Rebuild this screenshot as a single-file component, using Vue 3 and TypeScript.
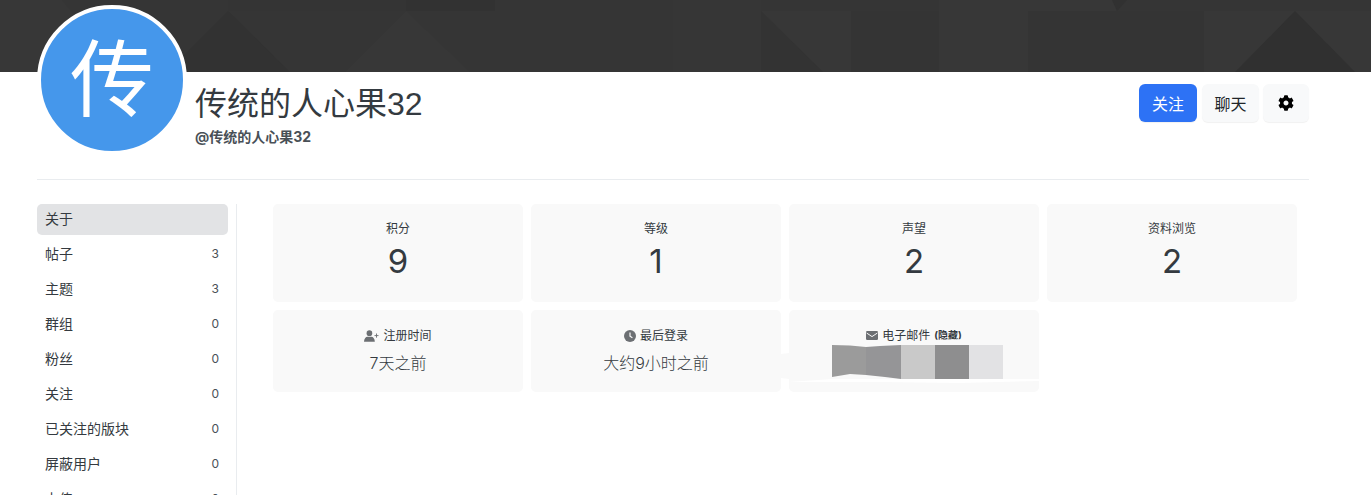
<template>
  <div class="page">
    <svg class="cover" viewBox="0 0 1371 72" preserveAspectRatio="none">
      <rect width="1371" height="72" fill="#353535" />
      <polygon v-for="(p, i) in coverShapes" :key="i" :points="p.points" :fill="p.fill" />
    </svg>

    <div class="container">
      <header class="profile-head">
        <div class="avatar">传</div>
        <div class="names">
          <h1>传统的人心果32</h1>
          <div class="handle">@传统的人心果32</div>
        </div>
        <div class="actions">
          <button class="btn primary">关注</button>
          <button class="btn chat">聊天</button>
          <button class="btn icon" aria-label="设置">
            <svg viewBox="0 0 512 512" width="16" height="16">
              <path d="M487.4 315.7l-42.6-24.6c4.3-23.2 4.3-47 0-70.2l42.6-24.6c4.9-2.8 7.1-8.6 5.5-14-11.1-35.6-30-67.8-54.7-94.6-3.8-4.1-10-5.1-14.8-2.3L380.8 110c-17.9-15.4-38.5-27.3-60.8-35.1V25.8c0-5.6-3.9-10.5-9.4-11.7-36.7-8.2-74.3-7.8-109.2 0-5.5 1.2-9.4 6.1-9.4 11.7V75c-22.2 7.9-42.8 19.8-60.8 35.1L88.7 85.5c-4.9-2.8-11-1.9-14.8 2.3-24.7 26.7-43.6 58.9-54.7 94.6-1.7 5.4.6 11.2 5.5 14L67.3 221c-4.3 23.2-4.3 47 0 70.2l-42.6 24.6c-4.9 2.8-7.1 8.6-5.5 14 11.1 35.6 30 67.8 54.7 94.6 3.8 4.1 10 5.1 14.8 2.3l42.6-24.6c17.9 15.4 38.5 27.3 60.8 35.1v49.2c0 5.6 3.9 10.5 9.4 11.7 36.7 8.2 74.3 7.8 109.2 0 5.5-1.2 9.4-6.1 9.4-11.7v-49.2c22.2-7.9 42.8-19.8 60.8-35.1l42.6 24.6c4.9 2.8 11 1.9 14.8-2.3 24.7-26.7 43.6-58.9 54.7-94.6 1.5-5.5-.7-11.3-5.6-14.1zM256 336c-44.1 0-80-35.9-80-80s35.9-80 80-80 80 35.9 80 80-35.9 80-80 80z" fill="#000" />
            </svg>
          </button>
        </div>
      </header>

      <div class="content">
        <aside class="sidebar">
          <a v-for="item in navItems" :key="item.label" class="nav-item" :class="{ active: item.active }">
            <span>{{ item.label }}</span>
            <span v-if="item.count !== undefined" class="count">{{ item.count }}</span>
          </a>
        </aside>

        <main class="stats">
          <div v-for="s in topStats" :key="s.label" class="card big">
            <div class="label">{{ s.label }}</div>
            <div class="value">{{ s.value }}</div>
          </div>

          <div class="card small">
            <div class="label">
              <svg viewBox="0 0 18 14" width="15" height="12">
                <circle cx="6.5" cy="3.6" r="3.4" fill="#6c6f73" />
                <path d="M0 14c0-3.6 2-6 4.2-6h4.6c2.2 0 4.2 2.4 4.2 6z" fill="#6c6f73" />
                <path d="M15 4v5M12.6 6.5h4.8" stroke="#6c6f73" stroke-width="1.1" />
              </svg>
              注册时间
            </div>
            <div class="text">7天之前</div>
          </div>
          <div class="card small">
            <div class="label">
              <svg viewBox="0 0 12 12" width="12" height="12">
                <circle cx="6" cy="6" r="6" fill="#6c6f73" />
                <path d="M6 2.6v3.6l2.4 1.6" stroke="#f9f9f9" stroke-width="1.2" fill="none" />
              </svg>
              最后登录
            </div>
            <div class="text">大约9小时之前</div>
          </div>
          <div class="card small email">
            <div class="label">
              <svg viewBox="0 0 12 9" width="12" height="9">
                <rect width="12" height="9" rx="1.2" fill="#6c6f73" />
                <path d="M.6 2l5.4 3.6L11.4 2" stroke="#f9f9f9" stroke-width="1" fill="none" />
              </svg>
              电子邮件 <small>(隐藏)</small>
            </div>
            <div class="text">&nbsp;</div>

            <!-- 邮箱打码的色块，盖在卡片上 -->
            <svg class="mask" viewBox="781 338 258 46" width="258" height="46">
              <polygon points="781,354 789,353 1037,344 1037,379 789,379 781,378" fill="#f9f9f9" />
              <polygon points="925,340 968,339 968,345 925,345" fill="#f9f9f9" />
              <polygon points="789,382 832,379 1039,379 1039,381 960,383 880,382" fill="#fff" />
              <polygon points="832,345 850,345.5 866,347 866,375 850,374 832,377" fill="#9b9b9b" />
              <polygon points="866,347 880,346 901,345 901,379 885,377 866,375" fill="#959597" />
              <rect x="901" y="345" width="34" height="34" fill="#c9c9c9" />
              <rect x="935" y="345" width="34" height="34" fill="#8e8e8f" />
              <rect x="969" y="345" width="34" height="34" fill="#e2e2e4" />
            </svg>
          </div>
        </main>
      </div>
    </div>
  </div>
</template>

<script setup lang="ts">
interface NavItem {
  label: string
  count?: number
  active?: boolean
}

const navItems: NavItem[] = [
  { label: '关于', active: true },
  { label: '帖子', count: 3 },
  { label: '主题', count: 3 },
  { label: '群组', count: 0 },
  { label: '粉丝', count: 0 },
  { label: '关注', count: 0 },
  { label: '已关注的版块', count: 0 },
  { label: '屏蔽用户', count: 0 },
  { label: '上传', count: 0 }
]

const topStats = [
  { label: '积分', value: 9 },
  { label: '等级', value: 1 },
  { label: '声望', value: 2 },
  { label: '资料浏览', value: 2 }
]

// 封面的几何底纹
const coverShapes = [
  { points: '0,0 62,0 120,72 0,72', fill: '#373737' },
  { points: '228,11 290,72 167,72', fill: '#323232' },
  { points: '228,0 406,0 406,11 228,11', fill: '#343434' },
  { points: '406,0 495,0 495,11 406,11', fill: '#323232' },
  { points: '406,11 470,72 345,72', fill: '#373737' },
  { points: '673,0 761,0 761,72 673,72', fill: '#363636' },
  { points: '761,11 851,11 851,72 761,72', fill: '#373737' },
  { points: '761,11 823,72 761,72', fill: '#333333' },
  { points: '851,11 939,11 939,72 851,72', fill: '#343434' },
  { points: '939,11 1028,11 1028,72 939,72', fill: '#373737' },
  { points: '1028,11 1204,11 1204,72 1028,72', fill: '#343434' },
  { points: '939,0 1117,0 1117,11 939,11', fill: '#373737' },
  { points: '1112,0 1127,0 1117,11', fill: '#313131' },
  { points: '1204,11 1371,11 1371,72 1204,72', fill: '#373737' },
  { points: '1295,11 1355,72 1235,72', fill: '#303030' }
]
</script>

<style>
html,
body {
  margin: 0;
  overflow: hidden;
  background: #fff;
}
</style>

<style scoped>
.page {
  height: 495px;
  overflow: hidden;
  font-family: "Inter", "Noto Sans CJK SC", sans-serif;
  color: #343a40;
}

.cover {
  display: block;
  width: 100%;
  height: 72px;
}

.container {
  margin: 0 62px 0 37px;
}

.profile-head {
  display: flex;
  align-items: flex-start;
  padding-bottom: 24px;
  border-bottom: 1px solid #e9ecef;
  margin-bottom: 24px;
}

.avatar {
  box-sizing: border-box;
  width: 150px;
  height: 150px;
  margin-top: -67px;
  border: 4px solid #fff;
  border-radius: 50%;
  background: #4597eb;
  color: #fff;
  font-size: 84px;
  line-height: 142px;
  text-align: center;
  position: relative;
}

.names {
  margin-left: 8px;
  padding-top: 9px;
}

h1 {
  margin: 0;
  font-family: "Liberation Sans", "Noto Sans CJK SC", sans-serif;
  font-size: 32px;
  font-weight: 400;
  line-height: 46px;
}

.handle {
  font-size: 14px;
  font-weight: 700;
  line-height: 20px;
  color: #495057;
}

.actions {
  display: flex;
  gap: 5px;
  margin-left: auto;
  margin-top: 12px;
}

.btn {
  height: 38px;
  padding: 0;
  border: none;
  border-radius: 6px;
  background: #f8f9fa;
  box-shadow: 0 1px 1px rgba(0, 0, 0, 0.06);
  color: #212529;
  font-family: inherit;
  font-size: 16px;
  display: flex;
  align-items: center;
  justify-content: center;
}

.btn.primary {
  background: #2d72f5;
  color: #fff;
  width: 58px;
}

.btn.chat {
  width: 57px;
}

.btn.icon {
  width: 46px;
  margin-left: -1px;
}

.content {
  display: flex;
  align-items: flex-start;
}

.sidebar {
  box-sizing: border-box;
  width: 200px;
  min-height: 320px;
  padding-right: 8px;
  border-right: 1px solid #e9ecef;
  flex-shrink: 0;
}

.nav-item {
  display: flex;
  justify-content: space-between;
  align-items: center;
  box-sizing: border-box;
  height: 31px;
  margin-bottom: 4px;
  padding: 0 9px 4px 8px;
  border-radius: 5px;
  font-size: 14px;
  color: #343a40;
}

.nav-item.active {
  background: #e2e3e5;
}

.count {
  margin-top: 2px;
  font-size: 12px;
  color: #495057;
}

.stats {
  display: grid;
  grid-template-columns: repeat(4, 250px);
  gap: 8px;
  margin-left: 36px;
}

.card {
  position: relative;
  box-sizing: border-box;
  background: #f9f9f9;
  border-radius: 5px;
  text-align: center;
  padding-top: 16px;
}

.card.big {
  height: 98px;
}

.card.small {
  height: 82px;
  padding-top: 17px;
}

.label {
  display: flex;
  align-items: center;
  justify-content: center;
  gap: 4px;
  font-size: 12px;
  line-height: 17px;
  color: #343a40;
}

.label small {
  font-size: 10px;
  font-weight: 700;
}

.value {
  margin-top: 2px;
  font-size: 33px;
  font-weight: 400;
  line-height: 44px;
}

.text {
  margin-top: 7px;
  font-size: 16px;
  font-weight: 300;
  line-height: 24px;
}

.mask {
  position: absolute;
  left: -8px;
  top: 28px;
}
</style>
